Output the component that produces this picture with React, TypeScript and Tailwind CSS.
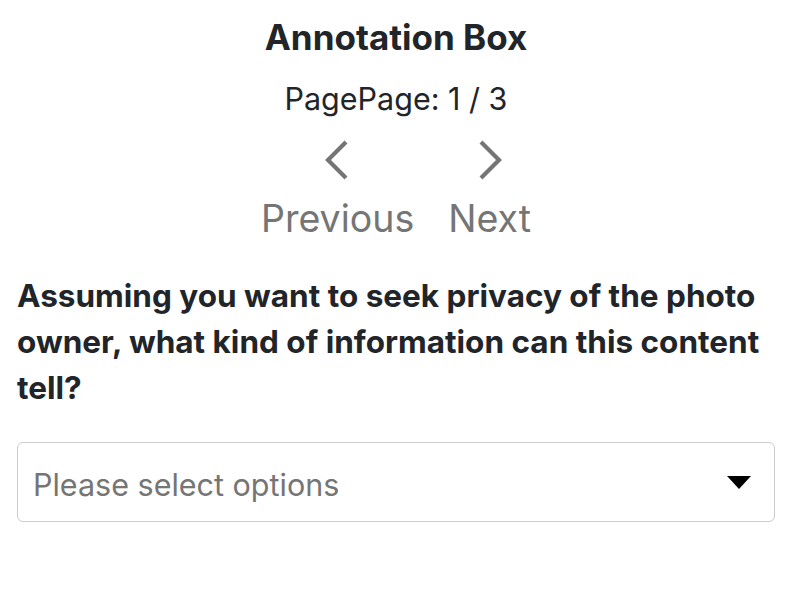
function Chevron({ dir }: { dir: "left" | "right" }) {
  const pts = dir === "left" ? "21,3 3,21 21,39" : "4,3 22,21 4,39";
  return (
    <svg width="25" height="42" viewBox="0 0 25 42" fill="none">
      <polyline points={pts} stroke="#757575" strokeWidth="4.2" />
    </svg>
  );
}

export default function App() {
  return (
    <div
      className="w-[804px] h-[594px] bg-white pl-[17px] pr-[29px] pt-[15px] text-[#212529]"
      style={{ fontFamily: "Inter, 'Noto Sans', sans-serif" }}
    >
      <h1 className="text-center text-[35px] font-bold leading-[44px]">Annotation Box</h1>
      <div className="mt-[22px] text-center text-[30.5px] leading-[36px]">PagePage: 1 / 3</div>
      <div className="mt-[22px] flex justify-center gap-[34px] text-[#757575]">
        <button className="flex flex-col items-center gap-[16px]">
          <Chevron dir="left" />
          <span className="text-[37.5px] leading-[44px]">Previous</span>
        </button>
        <button className="flex flex-col items-center gap-[16px]">
          <Chevron dir="right" />
          <span className="text-[37.5px] leading-[44px]">Next</span>
        </button>
      </div>
      <p className="mt-[32px] text-[31.5px] font-bold leading-[46px]">
        Assuming you want to seek privacy of the photo owner, what kind of information can this content tell?
      </p>
      <div className="mt-[31px] h-[80px] rounded-[6px] border border-[#cccccc] flex items-center justify-between pl-[15px] pr-[23px]">
        <span className="text-[30.5px] text-[#757575] pt-[6px]">Please select options</span>
        <svg width="24" height="13" viewBox="0 0 24 13">
          <polygon points="0,0 24,0 12,13" fill="#000" />
        </svg>
      </div>
    </div>
  );
}
